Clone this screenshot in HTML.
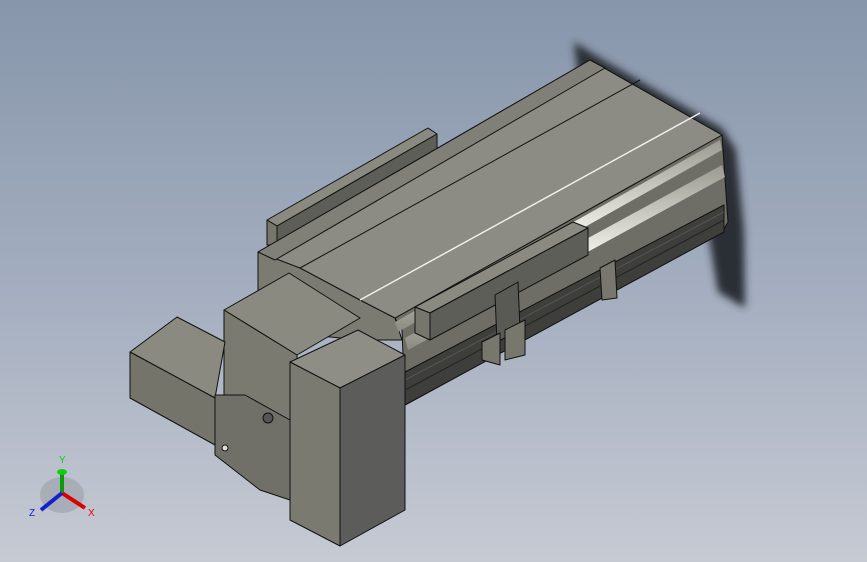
<!DOCTYPE html>
<html><head><meta charset="utf-8"><style>
html,body{margin:0;padding:0;width:867px;height:562px;overflow:hidden}
body{background:linear-gradient(180deg,#8796ab 0%,#a3adbf 50%,#c6cad3 100%)}
svg{position:absolute;left:0;top:0}
</style></head><body>
<svg width="867" height="562" viewBox="0 0 867 562">
<defs>
<filter id="b" x="-50%" y="-50%" width="200%" height="200%"><feGaussianBlur stdDeviation="4"/></filter>
<linearGradient id="rod" x1="0" y1="0" x2="0" y2="1"><stop offset="0" stop-color="#9a9a90"/><stop offset=".5" stop-color="#f4f4ee"/><stop offset="1" stop-color="#8a8a80"/></linearGradient>
</defs>
<!-- shadow -->
<polygon points="574,42 600,58 722,128 736,150 744,230 745,308 718,292 706,220 680,160 600,100 578,75" fill="#2c2f36" filter="url(#b)"/>
<g stroke="#111" stroke-width="1" stroke-linejoin="round">
<!-- left rail plate -->
<polygon points="267,220 428,128 437,134 277,226" fill="#8a8a80"/>
<polygon points="277,226 437,134 437,150 277,245" fill="#5e5e58"/>
<polygon points="267,220 277,226 277,245 267,245" fill="#76766c"/>
<!-- body left end -->
<polygon points="258,252 290,262 360,300 395,318 402,340 360,340 262,330 258,300" fill="#7b7b72"/>
<!-- body front face -->
<polygon points="395,318 722,135 728,222 722,232 405,405 402,330" fill="#6e6e66"/>
<polygon points="405,372 724,205 724,232 405,405" fill="#3e3e3a"/>
<polyline points="405,390 724,220" fill="none" stroke="#222"/>
<polyline points="405,380 724,212" fill="none" stroke="#555"/>
<!-- top face -->
<polygon points="258,252 590,60 722,135 395,318 360,300 300,268" fill="#8c8c84"/>
<polygon points="258,252 590,60 605,68 275,260" fill="#808078"/>
<line x1="300" y1="268" x2="640" y2="80" />
<line x1="360" y1="300" x2="700" y2="113" stroke="#eee" stroke-width="1.5"/>
<!-- rods -->
<polygon points="395,322 720,140 722,150 398,332" fill="url(#rod)" stroke="none"/>
<polygon points="405,338 722,165 725,177 408,350" fill="url(#rod)" stroke="none"/>
<!-- carriage plate -->
<polygon points="415,307 573,222 588,228 430,313" fill="#8a8a80"/>
<polygon points="430,313 588,228 588,255 430,340" fill="#5e5e58"/>
<polygon points="415,307 430,313 430,340 415,333" fill="#76766c"/>
<!-- bracket -->
<polygon points="495,295 518,282 520,330 497,342" fill="#5a5a55"/>
<polygon points="482,342 500,333 500,365 482,360" fill="#77776e"/>
<polygon points="505,330 525,320 525,355 505,360" fill="#77776e"/>
<polygon points="600,268 615,260 617,298 602,300" fill="#77776e"/>
<!-- motor block -->
<polygon points="224,310 289,273 360,318 297,355" fill="#8a8a80"/>
<polygon points="224,310 297,355 297,440 224,398" fill="#7a7a70"/>
<!-- left motor -->
<polygon points="130,352 177,317 225,342 215,398" fill="#8a8a80"/>
<polygon points="130,352 215,398 215,445 130,398" fill="#74746b"/>
<polygon points="215,395 245,395 290,420 290,500 260,490 215,455" fill="#707068"/>
<circle cx="225" cy="448" r="3" fill="#ddd"/>
<circle cx="268" cy="418" r="5" fill="#555"/>
<!-- cover box -->
<polygon points="290,362 358,330 405,355 340,388" fill="#8e8e86"/>
<polygon points="290,362 340,388 340,546 290,520" fill="#7a7a70"/>
<polygon points="340,388 405,355 405,510 340,546" fill="#5c5c5a"/>
</g>
<!-- triad -->
<g>
<ellipse cx="62" cy="495" rx="22" ry="18" fill="#9a9ea6" opacity=".6"/>
<line x1="62" y1="492" x2="62" y2="470" stroke="#0a9a0a" stroke-width="4"/>
<ellipse cx="62" cy="472" rx="5" ry="3" fill="#1c1"/>
<line x1="62" y1="493" x2="85" y2="508" stroke="#d00" stroke-width="4"/>
<line x1="62" y1="493" x2="41" y2="510" stroke="#12c" stroke-width="4"/>
<text x="59" y="463" font-family="Liberation Sans,sans-serif" font-size="10" fill="#1c1">Y</text>
<text x="88" y="516" font-family="Liberation Sans,sans-serif" font-size="10" fill="#e00">X</text>
<text x="29" y="516" font-family="Liberation Sans,sans-serif" font-size="10" fill="#12c">Z</text>
</g>
</svg>
</body></html>
